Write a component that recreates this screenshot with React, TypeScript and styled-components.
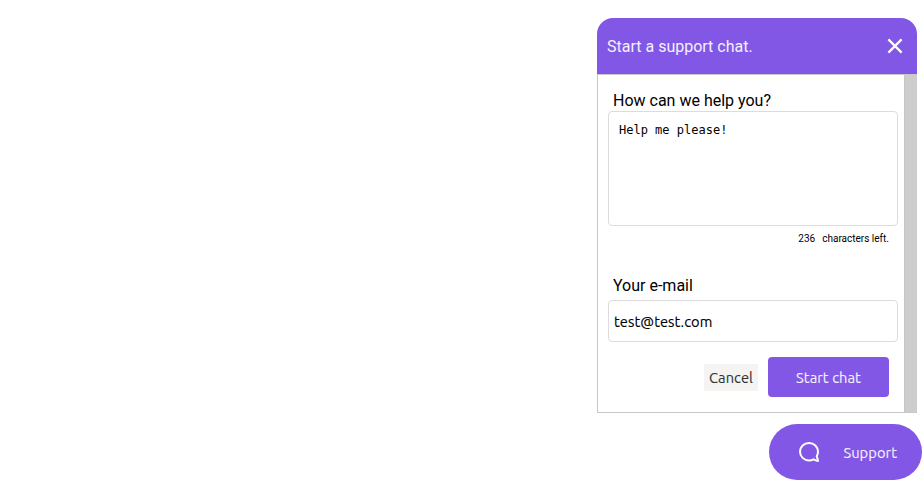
import React, { useState } from "react";
import styled, { createGlobalStyle, css } from "styled-components";

const purple = "#8257e5";

const uiText = css`
  font: 14.6667px "Ubuntu", "Noto Sans", sans-serif;
  letter-spacing: 0.07px;
  -webkit-text-stroke: 0.12px currentColor;
`;

const GlobalStyle = createGlobalStyle`
  * { box-sizing: border-box; }
  body { margin: 0; background: #fff; font-family: Roboto, sans-serif; overflow: hidden; }
`;

const Page = styled.main`
  width: 924px;
  height: 488px;
  padding: 18px 2px 0 0;
  display: flex;
  flex-direction: column;
  align-items: flex-end;
  gap: 11px;
`;

const Panel = styled.section`
  width: 320px;
  margin-right: 5px;
`;

const Header = styled.header`
  height: 56px;
  padding: 0 10px;
  display: flex;
  align-items: center;
  justify-content: space-between;
  background: ${purple};
  border-radius: 16px 16px 0 0;
  color: #f4f0ff;
  font-size: 16px;
`;

const CloseButton = styled.button`
  width: 24px;
  height: 24px;
  padding: 0;
  border: 0;
  background: none;
  display: grid;
  place-items: center;
`;

const Body = styled.div`
  height: 339px;
  display: flex;
  border: 1px solid #c8c8c8;
  border-right: 0;
`;

const Form = styled.form`
  flex: 1;
  padding: 16px 6px 0 10px;
  display: flex;
  flex-direction: column;
  color: #000;
`;

const ScrollTrack = styled.div`
  width: 13px;
  background: #cdcdcd;
  border-left: 1px solid #c8c5c2;
`;

const Label = styled.label`
  height: 20px;
  padding-left: 5px;
  font-size: 16px;
  line-height: 20px;
`;

const Message = styled.textarea`
  height: 115px;
  padding: 11px 10px;
  border: 1px solid #dcdcdc;
  border-radius: 4px;
  resize: none;
  outline: none;
  overflow: hidden;
  font: 12px/14px "DejaVu Sans Mono", monospace;
  color: #000;
`;

const Counter = styled.div`
  height: 50px;
  padding: 6px 9px 0 0;
  display: flex;
  justify-content: flex-end;
  gap: 7px;
  font-size: 10px;
  line-height: 13px;
`;

const Email = styled.input`
  height: 42px;
  margin-top: 4px;
  padding: 1px 5px 0;
  border: 1px solid #dcdcdc;
  border-radius: 4px;
  outline: none;
  ${uiText}
  color: #000;
`;

const Actions = styled.div`
  margin-top: 15px;
  padding-right: 9px;
  display: flex;
  align-items: center;
  justify-content: flex-end;
  gap: 10px;
`;

const Button = styled.button<{ $primary?: boolean }>`
  width: ${(p) => (p.$primary ? "121px" : "54px")};
  height: ${(p) => (p.$primary ? "40px" : "27px")};
  padding: 1px 0 0;
  border: 0;
  border-radius: ${(p) => (p.$primary ? "4px" : "0")};
  background: ${(p) => (p.$primary ? purple : "#f5f4f3")};
  color: ${(p) => (p.$primary ? "#f4f0ff" : "#2e3436")};
  ${uiText}
`;

const SupportButton = styled.button`
  width: 153px;
  height: 56px;
  padding: 0 25px 0 28px;
  border: 0;
  border-radius: 28px;
  background: ${purple};
  color: #f4f0ff;
  display: flex;
  align-items: center;
  justify-content: space-between;
  ${uiText}
`;

const SupportText = styled.span`
  padding-top: 1px;
`;

export default function App() {
  const [message, setMessage] = useState("Help me please!");
  const [email, setEmail] = useState("test@test.com");

  return (
    <>
      <GlobalStyle />
      <Page>
        <Panel>
          <Header>
            <span>Start a support chat.</span>
            <CloseButton aria-label="Close">
              <svg width="24" height="24" viewBox="0 0 24 24" fill="none" stroke="#fff" strokeWidth="2.2">
                <path d="M5.4 5.4 18.6 18.6M18.6 5.4 5.4 18.6" />
              </svg>
            </CloseButton>
          </Header>
          <Body>
            <Form>
              <Label htmlFor="message">How can we help you?</Label>
              <Message id="message" spellCheck={false} value={message} onChange={(e) => setMessage(e.target.value)} />
              <Counter>
                <span>{251 - message.length}</span>
                <span>characters left.</span>
              </Counter>
              <Label htmlFor="email">Your e-mail</Label>
              <Email id="email" value={email} onChange={(e) => setEmail(e.target.value)} />
              <Actions>
                <Button type="button">Cancel</Button>
                <Button type="button" $primary>Start chat</Button>
              </Actions>
            </Form>
            <ScrollTrack />
          </Body>
        </Panel>
        <SupportButton>
          <svg width="24" height="24" viewBox="0 0 24 24" fill="none" stroke="#fff" strokeWidth="2" strokeLinejoin="round">
            <path d="M19.7 16.4C20.5 15 21 13.4 21 11.8C21 6.8 17 3 12 3C7 3 3 6.8 3 11.8C3 16.6 7 20.4 12 20.4C13.7 20.4 15.2 20 16.5 19.3C17.9 20.4 19.3 20.9 21 21C20.9 19.2 20.5 17.8 19.7 16.4Z" />
          </svg>
          <SupportText>Support</SupportText>
        </SupportButton>
      </Page>
    </>
  );
}
